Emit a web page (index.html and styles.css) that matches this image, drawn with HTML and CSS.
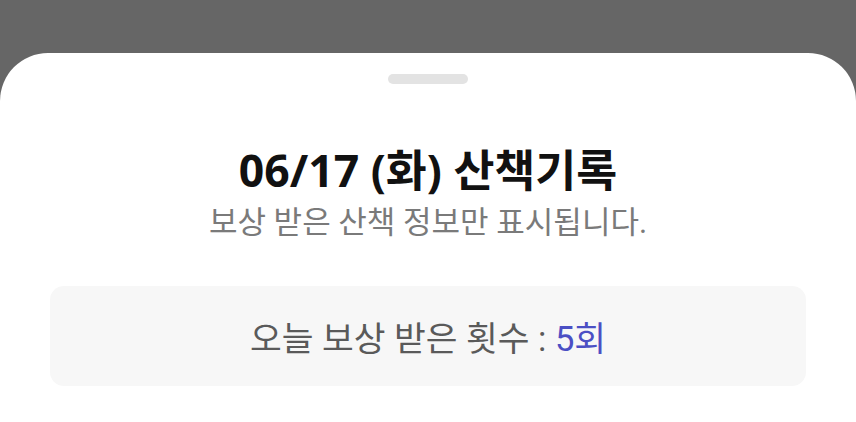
FILE: index.html
```html
<!DOCTYPE html>
<html lang="ko">
<head>
<meta charset="utf-8">
<link rel="stylesheet" href="styles.css">
</head>
<body>
<div class="sheet">
  <div class="handle"></div>
  <h1 class="title">06/17 (화) 산책기록</h1>
  <p class="subtitle">보상 받은 산책 정보만 표시됩니다.</p>
  <div class="summary">
    <span class="summary-label">오늘 보상 받은 횟수 : </span><span class="summary-count">5회</span>
  </div>
</div>
</body>
</html>
```
FILE: styles.css
```css
html, body {
  margin: 0;
  padding: 0;
  height: 100%;
  background: #666666;
  overflow: hidden;
}
.sheet {
  margin-top: 53px;
  height: calc(100% - 53px);
  background: #ffffff;
  border-radius: 48px 48px 0 0;
  display: flex;
  flex-direction: column;
  align-items: center;
  padding: 21px 50px 0;
  box-sizing: border-box;
}
.handle {
  width: 80px;
  height: 10px;
  border-radius: 5px;
  background: #e3e3e3;
}
.title {
  margin: 60px 0 0;
  font-family: "Noto Sans", "Noto Sans CJK KR", sans-serif;
  font-weight: 700;
  font-size: 44.5px;
  line-height: 52px;
  color: #111111;
}
.subtitle {
  margin: 8px 0 0;
  font-family: Roboto, "Noto Sans CJK KR", sans-serif;
  font-size: 31px;
  line-height: 38px;
  color: #7a7a7a;
}
.summary {
  margin-top: 44px;
  align-self: stretch;
  height: 100px;
  border-radius: 14px;
  background: #f7f7f7;
  display: flex;
  align-items: center;
  justify-content: center;
  font-family: Roboto, "Noto Sans CJK KR", sans-serif;
  font-size: 34.5px;
}
.summary-label {
  color: #5a5a5a;
  white-space: pre;
}
.summary-count {
  color: #4b4fc4;
}
```
